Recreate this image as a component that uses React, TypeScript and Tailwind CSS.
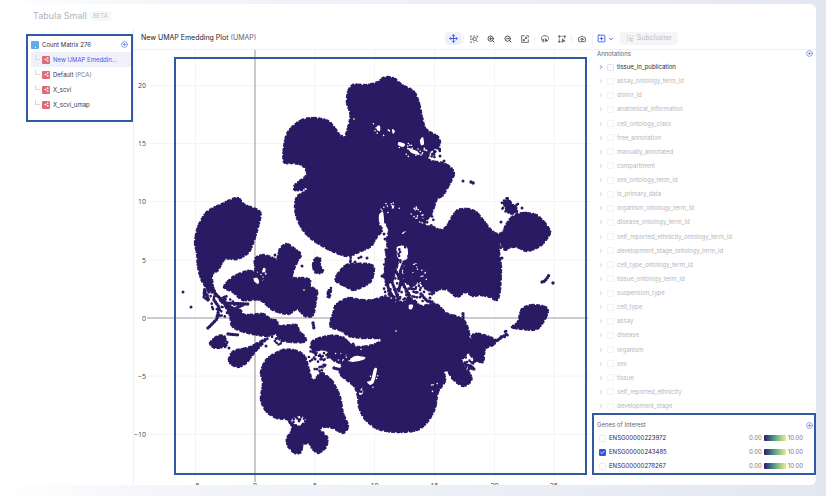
import { Camera, Check, ChevronDown, ChevronRight, CirclePlus, Move, SquarePlus, ZoomIn, ZoomOut } from 'lucide-react';
import type { ReactNode } from 'react';

const INK = '#2a1a64';

const EMBEDDINGS = [
  { name: 'New UMAP Emeddin...', active: true },
  { name: 'Default', kind: '(PCA)' },
  { name: 'X_scvi' },
  { name: 'X_scvi_umap' },
];

const ANNOTATIONS = [
  'tissue_in_publication',
  'assay_ontology_term_id',
  'donor_id',
  'anatomical_information',
  'cell_ontology_class',
  'free_annotation',
  'manually_annotated',
  'compartment',
  'sex_ontology_term_id',
  'is_primary_data',
  'organism_ontology_term_id',
  'disease_ontology_term_id',
  'self_reported_ethnicity_ontology_term_id',
  'development_stage_ontology_term_id',
  'cell_type_ontology_term_id',
  'tissue_ontology_term_id',
  'suspension_type',
  'cell_type',
  'assay',
  'disease',
  'organism',
  'sex',
  'tissue',
  'self_reported_ethnicity',
  'development_stage',
];

const GENES = [
  { id: 'ENSG00000223972', on: false },
  { id: 'ENSG00000243485', on: true },
  { id: 'ENSG00000278267', on: false },
];

// Cluster outlines, as flat x y lists
const CLUSTERS = [
  // large central mass, its right arm and the cluster beyond it
  [388, 77, 395, 79, 402, 85, 410, 89, 415, 93, 419, 103, 422, 117, 425, 128, 430, 132, 438, 137, 440, 143, 437, 148, 430, 151, 429, 160, 443, 163, 451, 168, 454, 174, 450, 183, 443, 195, 437, 199, 434, 207, 431, 214, 424, 225, 433, 227, 441, 230, 447, 226, 452, 217, 458, 210, 468, 209, 476, 212, 483, 220, 490, 229, 497, 234, 503, 232, 506, 225, 512, 217, 523, 213, 536, 215, 544, 222, 550, 231, 548, 237, 540, 246, 527, 251, 517, 247, 508, 248, 505, 251, 503, 243, 500, 243, 499, 252, 501, 267, 500, 290, 497, 300, 490, 297, 480, 295, 473, 296, 465, 292, 457, 297, 448, 290, 440, 289, 433, 292, 423, 287, 418, 282, 410, 285, 404, 278, 405, 262, 408, 249, 400, 246, 398, 262, 394, 276, 389, 282, 385, 270, 388, 256, 387, 240, 389, 230, 385, 222, 380, 213, 378, 222, 382, 230, 376, 238, 371, 246, 361, 251, 347, 256, 330, 250, 313, 240, 303, 230, 297, 218, 295, 207, 297, 197, 306, 190, 295, 190, 295, 185, 305, 177, 307, 172, 302, 165, 293, 163, 284, 162, 284, 147, 288, 132, 300, 121, 313, 118, 328, 121, 336, 130, 341, 137, 345, 137, 350, 120, 350, 112, 347, 103, 348, 92, 353, 85, 367, 85, 378, 82, 383, 78],
  // left crescent
  [195, 243, 198, 227, 207, 212, 222, 204, 237, 198, 245, 205, 260, 212, 258, 227, 253, 243, 248, 253, 237, 259, 225, 259, 218, 270, 212, 275, 213, 290, 208, 289, 202, 281, 198, 267, 197, 253],
  [224, 287, 233, 277, 247, 271, 255, 271, 255, 259, 263, 255, 273, 258, 277, 260, 280, 249, 287, 244, 296, 250, 301, 255, 297, 262, 292, 277, 303, 278, 310, 280, 310, 286, 317, 291, 316, 300, 313, 315, 305, 316, 297, 309, 288, 314, 273, 310, 260, 300, 243, 300, 233, 292],
  [223, 301, 231, 308, 240, 310, 245, 315, 263, 314, 270, 319, 277, 321, 279, 326, 296, 325, 299, 331, 305, 337, 304, 342, 284, 341, 276, 334, 267, 336, 253, 334, 241, 331, 232, 326, 230, 316],
  [210, 343, 218, 336, 225, 337, 224, 346, 215, 348],
  [229, 359, 234, 351, 250, 347, 266, 339, 254, 353, 246, 363, 238, 367, 231, 364],
  [313, 265, 315, 259, 320, 258, 320, 266, 323, 270, 321, 273, 315, 272],
  [328, 292, 331, 288, 330, 296, 328, 298],
  [336, 281, 337, 275, 345, 266, 352, 264, 368, 264, 374, 268, 371, 281, 362, 287, 353, 290, 345, 286],
  // lower left mass with its two feet
  [261, 372, 267, 359, 283, 350, 297, 351, 305, 357, 309, 370, 313, 381, 321, 373, 329, 378, 334, 384, 340, 397, 343, 413, 348, 426, 343, 433, 333, 428, 323, 427, 319, 431, 327, 437, 326, 447, 318, 453, 312, 448, 310, 444, 303, 444, 301, 452, 295, 453, 288, 446, 287, 438, 292, 430, 289, 420, 277, 418, 267, 412, 261, 400, 263, 383],
  // lower right mass
  [331, 320, 334, 311, 336, 305, 348, 298, 360, 300, 373, 300, 383, 297, 391, 299, 397, 303, 407, 298, 415, 301, 421, 306, 436, 304, 446, 313, 458, 317, 465, 322, 469, 333, 469, 350, 461, 362, 470, 374, 471, 381, 463, 386, 453, 379, 447, 370, 444, 372, 445, 381, 438, 392, 435, 408, 428, 421, 417, 430, 397, 432, 378, 429, 365, 419, 359, 407, 358, 397, 354, 386, 340, 374, 343, 366, 335, 359, 342, 345, 349, 344, 358, 347, 373, 345, 382, 340, 377, 338, 363, 338, 349, 336, 342, 331, 331, 327],
  [312, 342, 323, 337, 338, 336, 350, 344, 349, 352, 335, 361, 326, 350, 314, 350],
  [472, 336, 480, 334, 496, 340, 493, 345, 485, 349, 483, 362, 475, 359, 470, 353],
  [512, 327, 518, 322, 522, 309, 533, 305, 547, 308, 546, 317, 537, 329, 522, 329],
  [504, 203, 508, 200, 513, 205, 517, 212, 509, 213],
];

const GAPS = [
  [397, 247, 407, 247, 407, 259, 398, 258],
  [399, 142, 405, 144, 403, 147, 398, 145],
  [408, 148, 417, 151, 419, 155, 412, 153],
  [420, 140, 423, 137, 424, 144, 421, 145],
  [377, 126, 380, 126, 380, 131, 377, 130],
  [392, 129, 395, 131, 393, 134],
  [391, 205, 395, 206, 392, 209],
  [379, 215, 383, 212, 384, 224, 380, 221],
  [402, 233, 406, 231, 403, 234],
  [413, 264, 417, 263, 414, 265],
  [350, 360, 355, 356, 365, 357, 363, 360, 352, 362],
  [367, 382, 371, 380, 374, 369, 377, 369, 374, 382, 370, 385],
  [359, 392, 363, 387, 363, 393, 360, 395],
  [260, 269, 265, 268, 265, 272, 260, 272],
  [254, 277, 259, 280, 258, 284, 254, 281],
  [292, 419, 301, 416, 306, 420, 302, 425, 293, 425],
  [409, 305, 413, 305, 412, 309, 409, 309],
  [417, 285, 422, 284, 421, 288],
];

const STRANDS = [
  'M210 288L216 294L230 310M205 290L204 297L208 300L207 294M215 294L226 303L248 304M214 300L219 307L217 319L207 329M226 304L234 309L243 305',
  'M386 250L388 262L385 276L389 290L396 302M390 252L393 268L392 282L398 298L397 309M404 262L400 272L404 286L410 296M394 268L401 280L399 290M408 282L413 278L420 280M383 276L389 280M421 294L427 301L433 302',
  'M542 282L545 281L549 275M553 283L555 283M471 182L475 184M498 340L502 337L507 334M313 323L314 329M311 347L314 344L313 352M462 346L459 351M459 363L471 366L474 369L468 367',
  'M463 321L463 313M334 368L341 370L345 361M314 382L321 377M292 424L298 430M228 334L239 335M320 380L327 377',
];

// Stray cells: centre x, centre y, spread x, spread y, count
const SPRAYS = [
  [393, 278, 10, 30, 70],
  [411, 277, 11, 13, 55],
  [400, 253, 13, 12, 14],
  [409, 298, 16, 7, 22],
  [425, 289, 14, 7, 20],
  [319, 357, 11, 14, 50],
  [336, 346, 18, 10, 60],
  [301, 421, 12, 6, 30],
  [317, 430, 8, 5, 16],
  [224, 307, 14, 11, 34],
  [210, 293, 7, 7, 20],
  [284, 338, 17, 7, 26],
  [474, 352, 10, 12, 30],
  [466, 365, 11, 6, 12],
  [435, 153, 6, 8, 12],
  [503, 241, 5, 9, 14],
  [509, 205, 9, 7, 22],
  [340, 140, 5, 7, 12],
  [261, 275, 8, 8, 18],
  [355, 261, 12, 4, 6],
  [394, 218, 10, 12, 14],
  [426, 222, 9, 9, 16],
  [366, 389, 8, 8, 14],
  [504, 334, 6, 4, 6],
  [223, 343, 5, 5, 8],
];

const HOLE_SPRAYS = [
  [413, 149, 14, 8, 22],
  [379, 130, 12, 8, 8],
  [391, 209, 10, 7, 10],
  [417, 217, 8, 10, 18],
  [419, 276, 10, 10, 16],
  [261, 275, 6, 8, 12],
  [347, 353, 18, 8, 12],
  [373, 378, 5, 11, 10],
  [402, 297, 6, 6, 8],
  [434, 387, 5, 6, 4],
  [302, 190, 5, 2, 4],
];

const SINGLES = [
  [183, 292], [191, 307], [302, 266], [463, 181], [440, 156], [444, 161], [501, 222], [522, 208],
  [526, 213], [502, 258], [355, 262], [361, 257], [367, 258], [229, 348], [266, 346], [430, 298], [275, 255],
  [382, 276], [385, 239], [384, 234], [420, 297],
];

const HOT = [[354, 119], [326, 357], [396, 331], [304, 290], [323, 369]];

const X_TICKS = [
  { x: 195.5, label: '−5' },
  { x: 255, label: '0' },
  { x: 315, label: '5' },
  { x: 374.5, label: '10' },
  { x: 434.5, label: '15' },
  { x: 494.5, label: '20' },
  { x: 554, label: '25' },
];

const Y_TICKS = [
  { y: 85.5, label: '20' },
  { y: 143.5, label: '15' },
  { y: 201.5, label: '10' },
  { y: 260, label: '5' },
  { y: 318, label: '0' },
  { y: 376, label: '−5' },
  { y: 434.5, label: '−10' },
];

// Closed Catmull-Rom curve through the points
function outline(flat: number[]) {
  const n = flat.length / 2;
  const at = (i: number) => {
    const k = ((i + n) % n) * 2;
    return [flat[k], flat[k + 1]];
  };
  let d = `M${flat[0]} ${flat[1]}`;
  for (let i = 0; i < n; i++) {
    const [p0, p1, p2, p3] = [at(i - 1), at(i), at(i + 1), at(i + 2)];
    d += `C${p1[0] + (p2[0] - p0[0]) / 7} ${p1[1] + (p2[1] - p0[1]) / 7} `;
    d += `${p2[0] - (p3[0] - p1[0]) / 7} ${p2[1] - (p3[1] - p1[1]) / 7} ${p2[0]} ${p2[1]}`;
  }
  return d + 'Z';
}

// Zero-length segments, drawn as dots by the round line cap
function spray(groups: number[][], start: number) {
  let seed = start;
  const next = () => {
    seed = (seed * 16807) % 2147483647;
    return seed / 2147483647;
  };
  let d = '';
  groups.forEach(([cx, cy, rx, ry, count]) => {
    for (let i = 0; i < count; i++) {
      const angle = next() * Math.PI * 2;
      const r = Math.sqrt(next());
      d += `M${(cx + Math.cos(angle) * r * rx).toFixed(1)} ${(cy + Math.sin(angle) * r * ry).toFixed(1)}h0`;
    }
  });
  return d;
}

function UmapPlot() {
  const shape = CLUSTERS.map(outline).join('');
  return (
    <svg viewBox="134 50 458 435" className="block w-full" role="img" aria-label="UMAP scatter plot">
      <g stroke="#f4f4f6">
        {X_TICKS.map((t) => (
          <line key={t.x} x1={t.x} x2={t.x} y1={50} y2={481} />
        ))}
        {Y_TICKS.map((t) => (
          <line key={t.y} x1={148} x2={592} y1={t.y} y2={t.y} />
        ))}
      </g>
      <path d="M255 50V482M147 318H588" stroke="#bdbdc0" strokeWidth="1.6" />
      <g fill="#444" fontSize="7" style={{ fontFamily: '"Open Sans", sans-serif' }}>
        {Y_TICKS.map((t) => (
          <text key={t.y} x={146} y={t.y + 2.5} textAnchor="end">{t.label}</text>
        ))}
        {X_TICKS.map((t) => (
          <text key={t.x} x={t.x} y={488} textAnchor="middle">{t.label}</text>
        ))}
      </g>
      <g strokeLinecap="round" strokeLinejoin="round" fill="none">
        <path d={shape} fill={INK} />
        <path d={shape} stroke={INK} strokeWidth="2.6" strokeDasharray="0 1.9 0 3.1 0 2.4 0 1.6 0 3.6" />
        <path d={GAPS.map(outline).join('')} fill="#fff" />
        <path d={spray(HOLE_SPRAYS, 77)} stroke="#fff" strokeWidth="1.6" />
        <path d={STRANDS.join('')} stroke={INK} strokeWidth="3.4" strokeDasharray="0 2.4" />
        <path d={spray(SPRAYS, 4242)} stroke={INK} strokeWidth="2.7" />
        <path d={SINGLES.map(([x, y]) => `M${x} ${y}h0`).join('')} stroke={INK} strokeWidth="3" />
        <path d={HOT.map(([x, y]) => `M${x} ${y}h0`).join('')} stroke="#c9d75a" strokeWidth="1.8" />
      </g>
    </svg>
  );
}

function Glyph({ children }: { children: ReactNode }) {
  return (
    <svg viewBox="0 0 24 24" className="size-2" fill="none" stroke="currentColor" strokeWidth="2.4" strokeLinejoin="round">
      {children}
    </svg>
  );
}

function ZoomBoxIcon() {
  return (
    <Glyph>
      <path d="M1 3h5M10 3h5M19 3h4M1 3v4M1 11v4M1 19v3h5M10 22h3M23 3v5" />
      <circle cx="14" cy="12" r="5" />
      <path d="M18 16l6 6M6 8v8" />
    </Glyph>
  );
}

function RescaleIcon() {
  return (
    <Glyph>
      <path d="M11 2H2v20h20v-9M16 2h6v6" />
      <path d="M7 17L17 7M12 7h5v5M7 12v5h5" />
    </Glyph>
  );
}

function LassoIcon() {
  return (
    <Glyph>
      <path d="M4 15c-2-1-3-3-3-5 0-5 5-8 11-8s11 3 11 8c0 2-1 4-3 5" />
      <path d="M4 13h4v6H5c-2-1-2-4-1-6zM6 19l2 3" />
      <path d="M13 10v12l3-4h5z" fill="currentColor" strokeWidth="1" />
    </Glyph>
  );
}

function BoxSelectIcon() {
  return (
    <Glyph>
      <path d="M4 4h16M4 4v16M20 4v8M4 20h8" strokeDasharray="4 2" />
      <path d="M2 2h4v4H2zM18 2h4v4h-4zM2 18h4v4H2z" fill="currentColor" strokeWidth="1" />
      <path d="M13 11v12l3-4h6z" fill="currentColor" strokeWidth="1" />
    </Glyph>
  );
}

function Tool({ label, active, children }: { label: string; active?: boolean; children: ReactNode }) {
  return (
    <button
      type="button"
      aria-label={label}
      className={
        active
          ? 'flex h-[13px] w-[17px] items-center justify-center rounded-sm bg-[#eef0fd] text-[#3f5be8]'
          : 'flex h-[13px] w-[17px] items-center justify-center text-[#4b4b57]'
      }
    >
      {children}
    </button>
  );
}

function Divider() {
  return <span className="mx-px h-2 w-px bg-[#f0f0f4]" />;
}

function Sidebar() {
  return (
    <aside className="w-[116px] shrink-0 border-r border-[#f1f1f5] pt-1.5 pl-2">
      <div className="flex h-[88px] w-[107px] flex-col border-2 border-[#3358a4] pt-px pb-2 pl-[3px] text-[6px]">
        <div className="flex flex-1 items-center pr-[3px]">
          <span className="flex size-2 items-end justify-center rounded-[1px] bg-[#62aaea]">
            <span className="mb-px size-px bg-white" />
          </span>
          <span className="ml-[3px] flex-1 text-[#2f2e48]">Count Matrix 276</span>
          <button type="button" aria-label="Add embedding" className="text-[#5f78ee]">
            <CirclePlus className="size-[7px]" strokeWidth={2.4} />
          </button>
        </div>
        {EMBEDDINGS.map((item) => (
          <a
            key={item.name}
            href="#"
            className={
              item.active
                ? 'flex flex-1 items-center bg-[#f1f1fc] pl-1 text-[#4a55e6]'
                : 'flex flex-1 items-center pl-1 text-[#37364d]'
            }
          >
            <span className="mb-1 h-[5px] w-[5px] border-b border-l border-[#d8d8e0]" />
            <span className="ml-0.5 flex size-2 items-center justify-center rounded-[1px] bg-[#de6b78]">
              <svg viewBox="0 0 8 8" className="size-[7px] fill-white">
                <circle cx="5.5" cy="2.4" r=".9" />
                <circle cx="2.6" cy="4" r=".9" />
                <circle cx="5.5" cy="5.6" r=".9" />
                <path d="M2.6 4l3-1.6M2.6 4l3 1.6" stroke="#fff" strokeWidth=".5" />
              </svg>
            </span>
            <span className="ml-[3px] whitespace-nowrap">
              {item.name} {item.kind && <span className="text-[#7a7a8f]">{item.kind}</span>}
            </span>
          </a>
        ))}
      </div>
    </aside>
  );
}

function Toolbar() {
  return (
    <div className="flex h-[22px] items-center border-b border-[#f1f1f5]">
      <h2 className="flex-1 pl-[7px] text-[7px] whitespace-nowrap text-[#22212e]">
        New UMAP Emedding Plot <span className="text-[#62616f]">(UMAP)</span>
      </h2>
      <div className="flex items-center pr-0.5">
        <Tool label="Pan" active><Move className="size-[9px]" strokeWidth={2.6} /></Tool>
        <Divider />
        <Tool label="Zoom to box"><ZoomBoxIcon /></Tool>
        <Tool label="Zoom in"><ZoomIn className="size-2" strokeWidth={3} /></Tool>
        <Tool label="Zoom out"><ZoomOut className="size-2" strokeWidth={3} /></Tool>
        <Tool label="Reset axes"><RescaleIcon /></Tool>
        <Divider />
        <Tool label="Lasso select"><LassoIcon /></Tool>
        <Tool label="Box select"><BoxSelectIcon /></Tool>
        <Divider />
        <Tool label="Download image"><Camera className="size-2" strokeWidth={2.6} /></Tool>
      </div>
      <div className="flex w-[224px] shrink-0 items-center border-l border-[#f4f4f7] pl-1">
        <button type="button" aria-label="New selection" className="flex items-center gap-0.5 text-[#3f5be8]">
          <SquarePlus className="size-[9px]" strokeWidth={2.4} />
          <ChevronDown className="size-1.5" strokeWidth={4} />
        </button>
        <button
          type="button"
          disabled
          className="ml-1.5 flex h-[13px] w-[58px] items-center justify-center gap-1 rounded-sm bg-[#f5f5f6] text-[7px] text-[#bdbdc4]"
        >
          <svg viewBox="0 0 8 8" className="size-[7px]" fill="none" stroke="currentColor" strokeWidth="1">
            <path d="M1 1h1.5M4 1h1.5M7 1h1M1 3.5h1.500M1 6h1.500M5 3v4M5 4h3M5 7h3" />
          </svg>
          Subcluster
        </button>
      </div>
    </div>
  );
}

function AnnotationRow({ name, first }: { name: string; first: boolean }) {
  return (
    <li className="flex flex-1 items-center pl-1.5">
      <button type="button" aria-label={`Expand ${name}`} className={first ? 'text-[#4f68ea]' : 'text-[#c6c6ce]'}>
        <ChevronRight className="size-1.5" strokeWidth={3.5} />
      </button>
      <label className={first ? 'flex items-center pl-[3px] text-[#262538]' : 'flex items-center pl-[3px] text-[#b6b6bd]'}>
        <input
          type="checkbox"
          className={
            first
              ? 'mr-[3px] size-[7px] appearance-none rounded-[1px] border border-[#e4e4ec] bg-white'
              : 'mr-[3px] size-[7px] appearance-none rounded-[1px] border border-[#f3f3f6] bg-white'
          }
        />
        {name}
      </label>
    </li>
  );
}

function RightPanel() {
  return (
    <aside className="flex w-[224px] shrink-0 flex-col pb-2.5 text-[6px] leading-[10px]">
      <div className="flex h-2.5 items-start justify-between pr-[3px] pl-[5px]">
        <h3 className="leading-2 text-[#66656e]">Annotations</h3>
        <button type="button" aria-label="Add annotation" className="text-[#5f78ee]">
          <CirclePlus className="size-[7px]" strokeWidth={2.4} />
        </button>
      </div>
      <ul className="flex flex-1 flex-col">
        {ANNOTATIONS.map((name, i) => (
          <AnnotationRow key={name} name={name} first={i === 0} />
        ))}
      </ul>
      <section className="flex h-[62px] flex-col border-2 border-[#3358a4] pt-1 pr-px pl-[3px]">
        <div className="flex h-3 items-center justify-between">
          <h3 className="text-[#66656e]">Genes of Interest</h3>
          <button type="button" aria-label="Add gene" className="text-[#5f78ee]">
            <CirclePlus className="size-[7px]" strokeWidth={2.4} />
          </button>
        </div>
        <ul>
          {GENES.map((gene) => (
            <li key={gene.id} className="flex h-3.5 items-center pr-2.5 pl-0.5">
              <label className="flex flex-1 items-center text-[#2c2158]">
                <span className="relative mr-[3px] flex">
                  <input
                    type="checkbox"
                    defaultChecked={gene.on}
                    className="peer size-[7px] appearance-none rounded-[1px] border border-[#ececf2] bg-white checked:border-[#2f55e6] checked:bg-[#2f55e6]"
                  />
                  <Check
                    className="pointer-events-none absolute inset-px hidden size-[5px] text-white peer-checked:block"
                    strokeWidth={4}
                  />
                </span>
                {gene.id}
              </label>
              <span className="text-[#75747f]">0.00</span>
              <span className="mx-0.5 h-1.5 w-[22px] rounded-[1px] bg-linear-to-r from-[#2a1a64] via-[#5aa58c] to-[#e8f07a]" />
              <span className="text-[#75747f]">10.00</span>
            </li>
          ))}
        </ul>
      </section>
    </aside>
  );
}

export default function App() {
  return (
    <div className="flex min-h-screen flex-col bg-linear-to-r from-white via-[#f3f5fa] via-20% to-[#e3e7f1] pt-1 pr-2.5 pb-[11px] pl-[18px] font-['Inter',sans-serif]">
      <div className="flex flex-1 flex-col overflow-hidden rounded-md bg-white">
        <header className="flex h-6 items-center gap-0.5 pl-[15px]">
          <h1 className="text-[9px] text-[#b3b3b8]">Tabula Small</h1>
          <span className="rounded-sm bg-[#f8f8f9] px-1 text-[6px] leading-[10px] text-[#c6c6cb]">BETA</span>
        </header>
        <div className="flex flex-1">
          <Sidebar />
          <main className="flex min-w-0 flex-1 flex-col">
            <Toolbar />
            <div className="flex flex-1">
              <div className="relative min-w-0 flex-1">
                <UmapPlot />
                <div className="pointer-events-none absolute inset-x-0 top-[7px] bottom-2.5 mr-[5px] ml-10 border-2 border-[#3358a4]" />
              </div>
              <RightPanel />
            </div>
          </main>
        </div>
      </div>
    </div>
  );
}
